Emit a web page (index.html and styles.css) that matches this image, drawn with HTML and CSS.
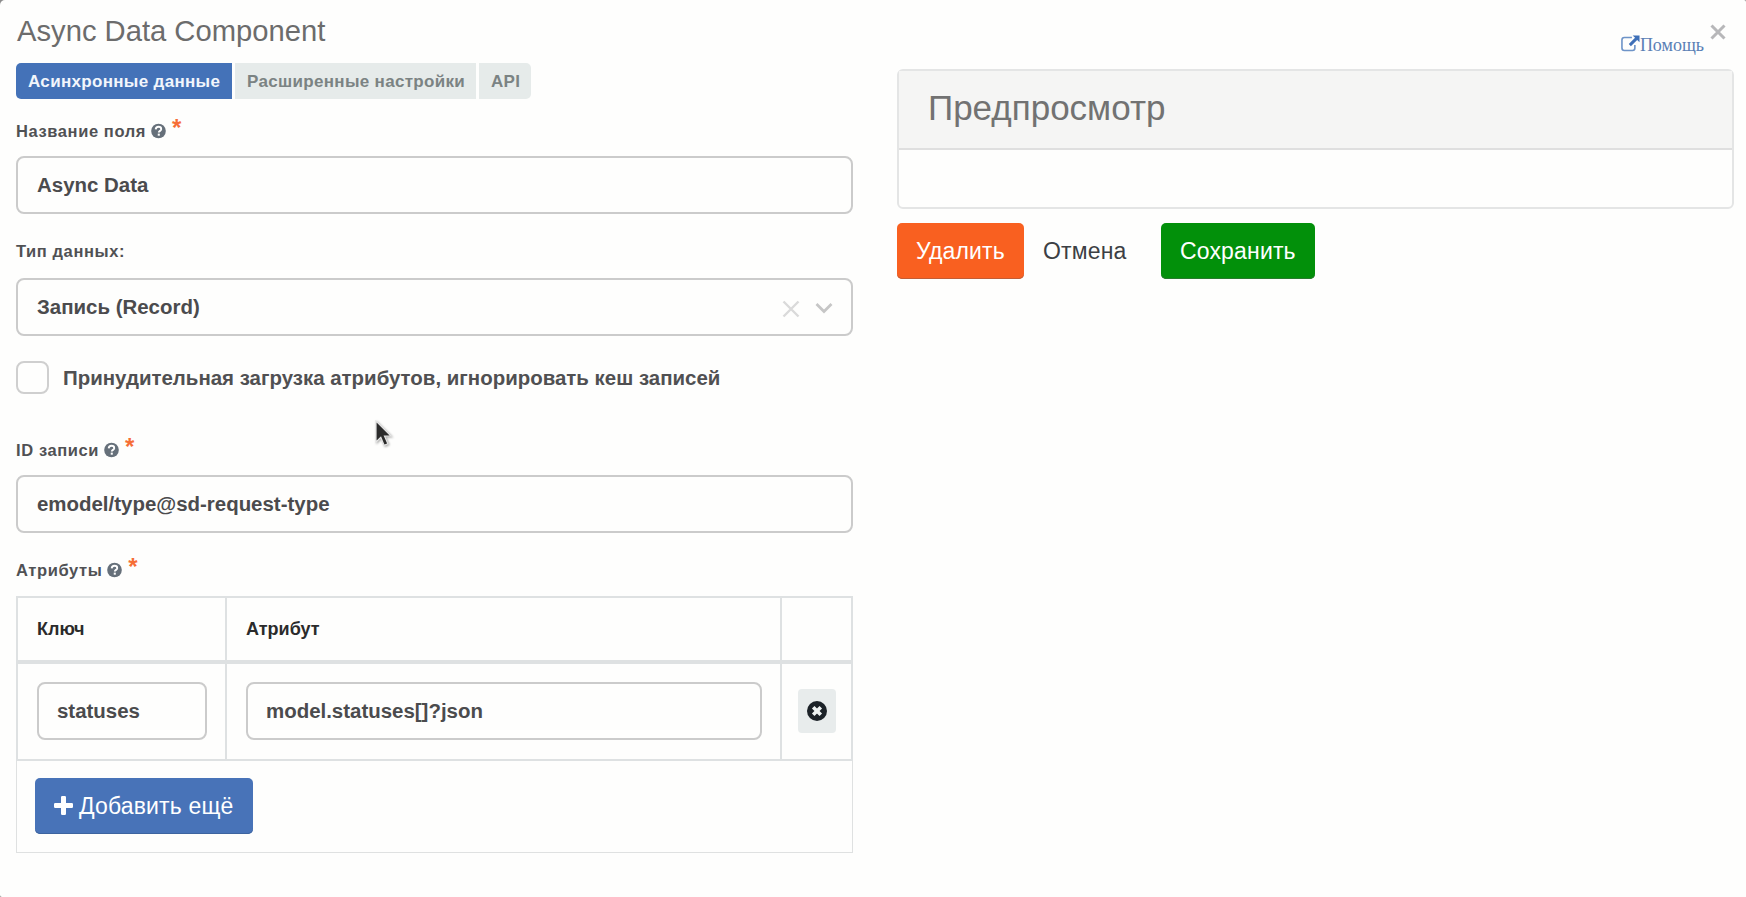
FILE: index.html
```html
<!DOCTYPE html>
<html lang="ru">
<head>
<meta charset="utf-8">
<title>Async Data Component</title>
<link rel="stylesheet" href="styles.css">
</head>
<body>
<svg class="sprite" aria-hidden="true">
  <symbol id="help" viewBox="0 0 16 16"><circle cx="8" cy="8" r="7.8" fill="#66707a"/><path d="M5 6.300C5.100 4.500 6.300 3.500 8 3.500c1.700 0 2.900 1 2.900 2.500 0 1.800-2.600 1.900-2.600 3.600" fill="none" stroke="#fff" stroke-width="2"/><rect x="7.200" y="10.800" width="2.200" height="2.200" fill="#fff"/></symbol>
</svg>
<main class="modal">
  <section class="settings">
    <h1 class="title"><span>Async Data Component</span></h1>
    <nav class="tabs">
      <a class="tab tab-active"><span>Асинхронные данные</span></a>
      <a class="tab tab-wide"><span>Расширенные настройки</span></a>
      <a class="tab tab-api"><span>API</span></a>
    </nav>
    <div class="label label-name"><span>Название поля</span><svg class="help"><use href="#help"/></svg><span class="star">*</span></div>
    <div class="input"><span>Async Data</span></div>
    <div class="label label-type"><span>Тип данных:</span></div>
    <div class="input select"><span>Запись (Record)</span>
      <svg class="clear" viewBox="0 0 18 18"><path d="M1.500 1.500l15 15M16.500 1.500l-15 15"/></svg>
      <svg class="chevron" viewBox="0 0 18 12"><path d="M1.500 2l7.500 7.500L16.500 2"/></svg>
    </div>
    <div class="check"><i class="box"></i><span>Принудительная загрузка атрибутов, игнорировать кеш записей</span></div>
    <div class="label label-id"><span>ID записи</span><svg class="help"><use href="#help"/></svg><span class="star">*</span></div>
    <div class="input"><span>emodel/type@sd-request-type</span></div>
    <div class="label label-attr"><span>Атрибуты</span><svg class="help"><use href="#help"/></svg><span class="star">*</span></div>
    <div class="grid">
      <div class="row head">
        <div class="cell"><span>Ключ</span></div>
        <div class="cell"><span>Атрибут</span></div>
        <div class="cell"></div>
      </div>
      <div class="row data">
        <div class="cell"><div class="input"><span>statuses</span></div></div>
        <div class="cell"><div class="input"><span>model.statuses[]?json</span></div></div>
        <div class="cell cell-remove"><div class="remove"><svg viewBox="0 0 20 20"><circle cx="10" cy="10" r="10" fill="#1c2228"/><path d="M6.200 6.200l7.600 7.600M13.800 6.200l-7.600 7.600" stroke="#eef2f2" stroke-width="3.600"/></svg></div></div>
      </div>
      <div class="foot"><div class="btn btn-add"><svg class="plus" viewBox="0 0 19 19"><path d="M7 1.200Q7 0 8.200 0h2.600Q12 0 12 1.200V7h5.800Q19 7 19 8.200v2.600Q19 12 17.800 12H12v5.800Q12 19 10.800 19H8.200Q7 19 7 17.800V12H1.200Q0 12 0 10.800V8.200Q0 7 1.200 7H7z" fill="#fff"/></svg><span>Добавить ещё</span></div></div>
    </div>
  </section>
  <section class="side">
    <div class="top">
      <a class="link"><svg viewBox="0 0 20 17"><path d="M11.500 2.200H3.500Q1 2.200 1 4.700v8.600Q1 15.800 3.500 15.800h8.600q2.500 0 2.500-2.500V10" fill="none" stroke="#6e94c8" stroke-width="1.700"/><path d="M12.300 0H19.500v7.200l-2.500-2.500-6.600 6.600-2.200-2.200 6.600-6.600z" fill="#3f70b8"/></svg><span>Помощь</span></a>
      <svg class="close" viewBox="0 0 16 16"><path d="M1.500 1.500l13 13M14.500 1.500l-13 13"/></svg>
    </div>
    <div class="card"><div class="card-head"><span>Предпросмотр</span></div><div class="card-body"></div></div>
    <div class="actions">
      <div class="btn btn-delete"><span>Удалить</span></div>
      <div class="btn btn-cancel"><span>Отмена</span></div>
      <div class="btn btn-save"><span>Сохранить</span></div>
    </div>
  </section>
</main>
<svg class="cursor" viewBox="0 0 18 28"><path d="M1 1v21l4.800-4.600 3.400 8 3.700-1.600-3.400-7.800h6.500z" fill="#2b2b2b" stroke="#e4e4e4" stroke-width="1.200"/></svg>
</body>
</html>
```

FILE: styles.css
```css
* { box-sizing: border-box; }
body { margin: 0; width: 1746px; height: 897px; overflow: hidden; background: #8c8c8c; font-family: "Liberation Sans", Arial, sans-serif; }
svg { display: block; flex: none; }
span { white-space: nowrap; }
.sprite { position: absolute; width: 0; height: 0; }
.modal { display: flex; gap: 44px; height: 897px; padding-left: 16px; background: #fefefd; border-radius: 5px 2px 0 2px; }
.settings { width: 837px; flex: none; }
.title { margin: 0; padding: 11px 0 0 1px; height: 63px; font-size: 29.2px; font-weight: 400; line-height: 40px; color: #6c6c6c; }
.tabs { display: flex; gap: 3px; height: 36px; }
.tab { width: 216px; padding-left: 12px; background: #e6ebea; color: #7b8383; font-size: 17px; font-weight: 700; line-height: 38px; letter-spacing: .32px; }
.tab-active { background: #4472b8; color: #f2f6fc; border-radius: 5px 0 0 5px; }
.tab-wide { width: 241px; }
.tab-api { width: 52px; border-radius: 0 5px 5px 0; }
.label { display: flex; height: 20px; font-size: 16.5px; font-weight: 700; line-height: 21px; letter-spacing: .6px; color: #505154; }
.label-name { margin: 22px 0 15px; }
.label-type { margin: 27px 0 17px; }
.label-id { margin: 46px 0 15px; }
.label-attr { margin: 27px 0 16px; }
.help { width: 15px; height: 16px; margin: 2px 6px 0 5px; }
.star { font-size: 24px; line-height: 24px; color: #f66e36; margin-top: -5px; }
.input { display: flex; align-items: center; height: 58px; padding: 0 19px; border: 2px solid #cbcbcb; border-radius: 8px; background: #fefefd; font-size: 20.450px; font-weight: 700; line-height: 28px; color: #4b4b4d; }
.select { padding-right: 18px; }
.clear { width: 18px; height: 18px; margin: 3px 15px 0 auto; fill: none; stroke: #dadada; stroke-width: 2.400; }
.chevron { width: 18px; height: 12px; margin-top: 2px; fill: none; stroke: #c6c6c6; stroke-width: 2.800; }
.check { display: flex; align-items: center; gap: 14px; height: 33px; margin-top: 25px; font-size: 20.450px; font-weight: 700; color: #505052; }
.box { width: 33px; height: 33px; border: 2px solid #cfcfcf; border-radius: 8px; }
.grid { height: 257px; border: 1px solid #dfe1e1; }
.row { display: grid; margin: 0 -1px; border-left: 2px solid #dee1e2; grid-template-columns: 209px 555px 71px; }
.head { height: 64px; margin-top: -1px; border-top: 2px solid #dee1e2; font-size: 18px; font-weight: 700; line-height: 63px; color: #2b2b2b; }
.head .cell { height: 62px; padding-left: 19px; border-right: 2px solid #dee1e2; }
.data { height: 101px; border-top: 4px solid #dee1e2; border-bottom: 2px solid #dee1e2; }
.data .cell { padding: 18px 18px 0 19px; border-right: 2px solid #dee1e2; }
.data .cell .input { padding: 0 18px; }
.data .cell.cell-remove { padding: 25px 0 0 16px; }
.remove { display: flex; align-items: center; justify-content: center; width: 38px; height: 44px; border-radius: 4px; background: #e8ecec; }
.remove svg { width: 20px; height: 20px; }
.foot { padding: 17px 0 0 18px; }
.btn { display: flex; align-items: center; height: 56px; padding: 0 0 1px 19px; border-radius: 5px; font-size: 23px; line-height: 30px; letter-spacing: .16px; color: #fff; }
.btn-add { width: 218px; background: #4873b8; box-shadow: inset 0 -1px #3d649f; }
.plus { width: 19px; height: 19px; margin: 0 6px 1px 0; }
.side { width: 837px; flex: none; }
.top { display: flex; justify-content: flex-end; height: 69px; padding-right: 8px; }
.link { display: flex; height: 20px; margin-top: 35px; color: #5a80b5; font-family: "Liberation Serif", serif; font-size: 18px; line-height: 20px; }
.link svg { width: 19px; height: 17px; }
.close { width: 16px; height: 16px; margin: 24px 0 0 6px; fill: none; stroke: #b7b7b9; stroke-width: 3; }
.card { height: 140px; border: 2px solid #e4e5e5; border-radius: 6px; }
.card-head { height: 79px; padding-left: 29px; border-bottom: 2px solid #dfdfdf; background: #f5f5f4; font-size: 35px; line-height: 74px; color: #727272; }
.actions { display: flex; margin-top: 14px; }
.btn-delete { width: 127px; background: #f96020; box-shadow: inset 0 -1px #c25d35; }
.btn-cancel { width: 137px; color: #3c3f44; }
.btn-save { width: 154px; background: #02900a; box-shadow: inset 0 -1px #277b2c; }
.cursor { position: absolute; left: 375px; top: 420px; width: 18px; height: 28px; filter: drop-shadow(1px 1px 1px #0005); }
```
